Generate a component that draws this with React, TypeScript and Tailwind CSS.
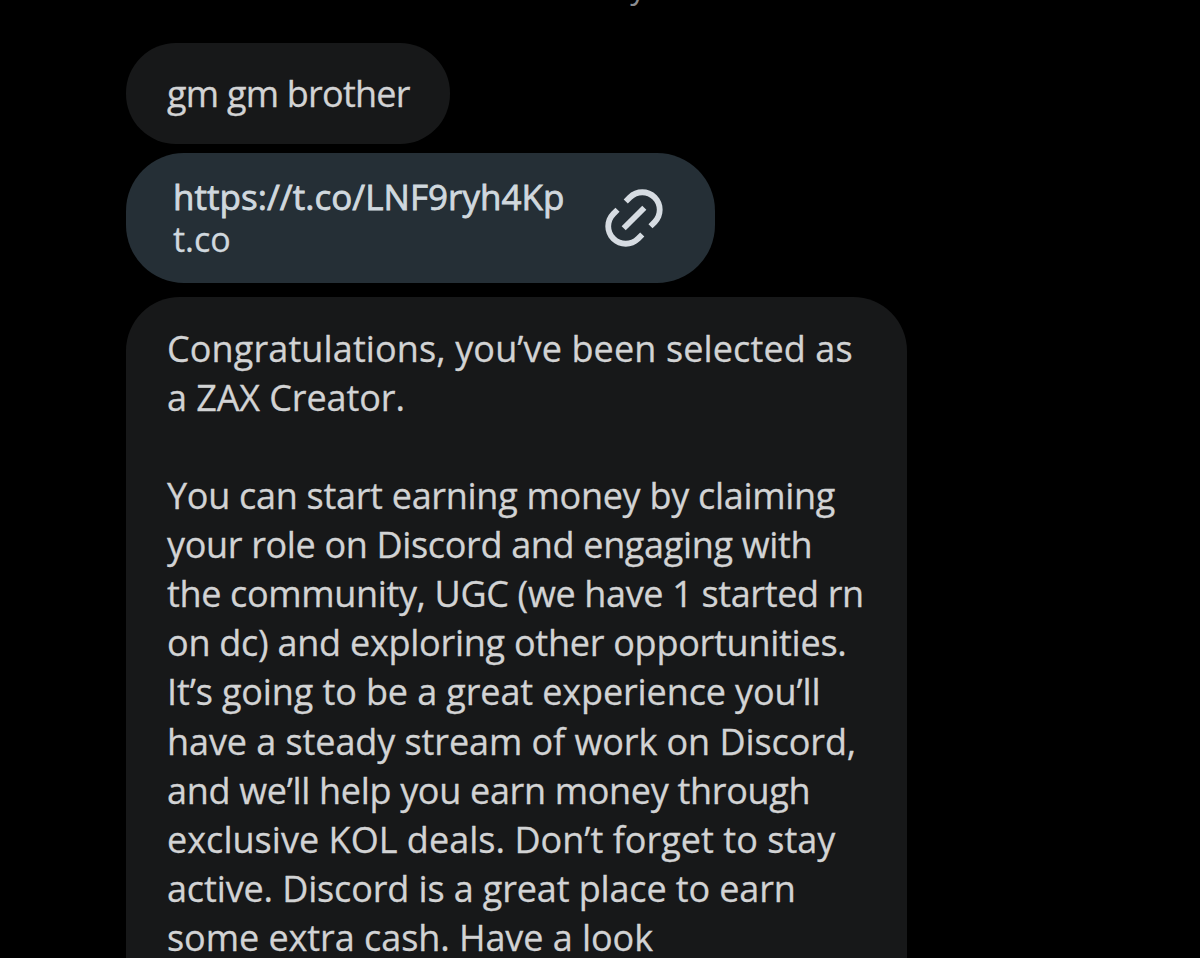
interface MessageLine {
  text: string;
  tracking: string;
}

const congratsLines: MessageLine[] = [
  { text: "Congratulations, you’ve been selected as", tracking: "tracking-[0.12px]" },
  { text: "a ZAX Creator.", tracking: "tracking-[-0.1px]" },
  { text: "", tracking: "" },
  { text: "You can start earning money by claiming", tracking: "tracking-[-0.29px]" },
  { text: "your role on Discord and engaging with", tracking: "tracking-[-0.34px]" },
  { text: "the community, UGC (we have 1 started rn", tracking: "tracking-[-0.35px]" },
  { text: "on dc) and exploring other opportunities.", tracking: "tracking-[-0.26px]" },
  { text: "It’s going to be a great experience you’ll", tracking: "tracking-[-0.12px]" },
  { text: "have a steady stream of work on Discord,", tracking: "tracking-[-0.08px]" },
  { text: "and we’ll help you earn money through", tracking: "tracking-[-0.32px]" },
  { text: "exclusive KOL deals. Don’t forget to stay", tracking: "tracking-[0.03px]" },
  { text: "active. Discord is a great place to earn", tracking: "tracking-[-0.13px]" },
  { text: "some extra cash. Have a look", tracking: "tracking-[-0.06px]" },
];

function LinkIcon() {
  return (
    <svg viewBox="0 0 24 24" className="size-[70px] shrink-0 fill-[#d6dce2]">
      <path d="M18.36 5.64c-1.95-1.96-5.11-1.96-7.07 0L9.88 7.05 8.46 5.64l1.42-1.42c2.73-2.73 7.16-2.73 9.9 0 2.73 2.74 2.73 7.17 0 9.9l-1.42 1.42-1.41-1.42 1.41-1.41c1.96-1.96 1.96-5.12 0-7.07zm-2.12 3.53l-7.07 7.07-1.41-1.41 7.07-7.07 1.41 1.41zm-12.02.71l1.42-1.42 1.41 1.42-1.41 1.41c-1.96 1.96-1.96 5.12 0 7.07 1.95 1.96 5.11 1.96 7.07 0l1.41-1.41 1.42 1.41-1.42 1.42c-2.73 2.73-7.16 2.73-9.9 0-2.73-2.74-2.73-7.17 0-9.9z" />
    </svg>
  );
}

function LinkCard({ url, domain }: { url: string; domain: string }) {
  return (
    <div className="mt-[9px] flex h-[130px] w-[589px] items-center justify-between rounded-[58px] bg-[#252f36] pl-[47px] pr-[46px] text-[#d0d8de]">
      <div className="whitespace-nowrap">
        <p className="text-[35px] leading-[42px] tracking-[0.04px] [-webkit-text-stroke:0.8px]">
          {url}
        </p>
        <p className="text-[34px] leading-[42px]">{domain}</p>
      </div>
      <LinkIcon />
    </div>
  );
}

export default function App() {
  return (
    <main className="flex h-[958px] w-[1200px] flex-col overflow-hidden bg-black font-['Open_Sans',sans-serif] text-[#d2d3d4]">
      {/* Date label, mostly scrolled out of view */}
      <div className="flex h-[43px] shrink-0 items-start justify-center pl-[4px]">
        <p className="-mt-[34px] text-[31px] leading-[42px] text-[#8b8d90]">
          Today
        </p>
      </div>

      <div className="flex flex-col items-start pl-[126px] [-webkit-text-stroke:0.3px]">
        <div className="flex h-[101px] w-[324px] shrink-0 items-center whitespace-nowrap rounded-[50px] bg-[#171819] pl-[41px] text-[36px] tracking-[-0.77px]">
          <span>gm gm brother</span>
        </div>

        <LinkCard url="https://t.co/LNF9ryh4Kp" domain="t.co" />

        <div className="mt-[14px] h-[720px] w-[781px] rounded-t-[54px] bg-[#171819] pl-[41px] pt-[26.5px]">
          {congratsLines.map((line, i) => (
            <p
              key={i}
              className={`h-[49.15px] whitespace-nowrap text-[36px] leading-[49.15px] ${line.tracking}`}
            >
              {line.text}
            </p>
          ))}
        </div>
      </div>
    </main>
  );
}
